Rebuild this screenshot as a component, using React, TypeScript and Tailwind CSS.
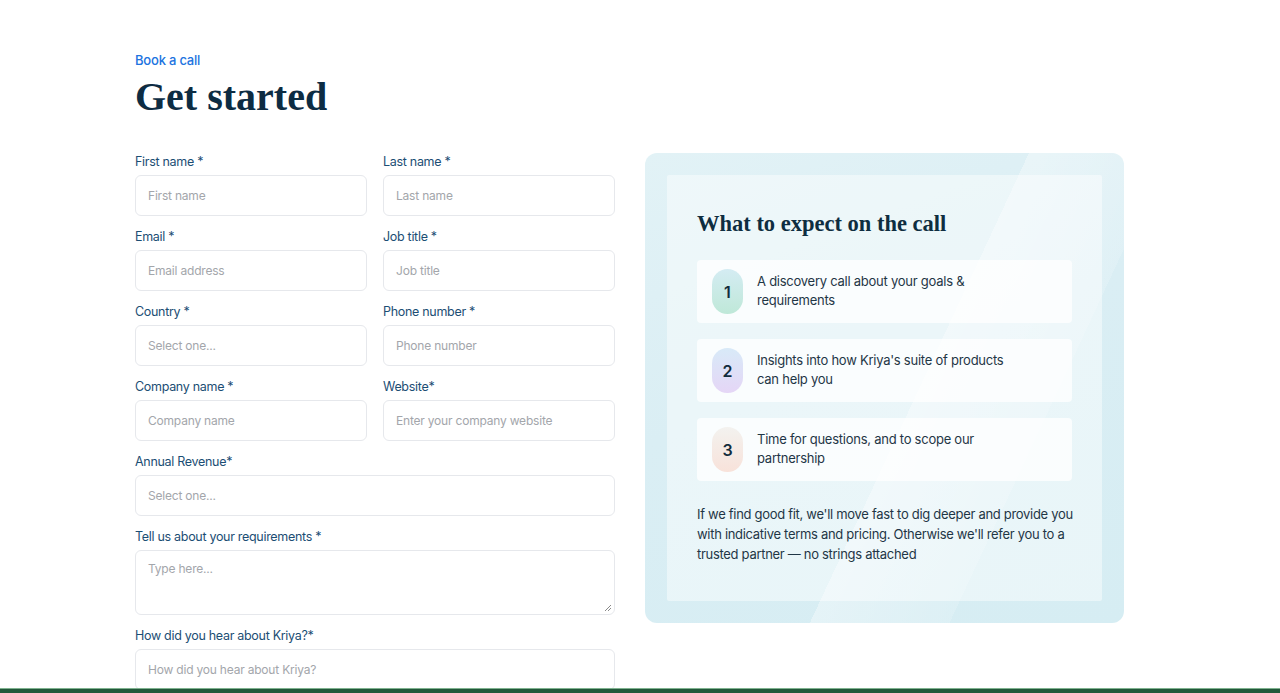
import React from "react";

const sans = { fontFamily: "Inter, 'Open Sans', sans-serif" };

function Field({ label, placeholder, className = "" }: { label: string; placeholder: string; className?: string }) {
  return (
    <div className={`flex flex-col ${className}`}>
      <label className="text-[12.5px] leading-[16px] text-[#1c4e74] mt-[1px] mb-[5px] tracking-[-0.3px]">{label}</label>
      <div className="h-[41px] rounded-[6px] border border-[#e6e8ec] bg-white flex items-center px-[12px] text-[12px] tracking-[-0.2px] text-[#a3a6ab]">
        {placeholder}
      </div>
    </div>
  );
}

function Item({ n, text, grad }: { n: string; text: React.ReactNode; grad: string }) {
  return (
    <div className="h-[63px] rounded-[4px] bg-white/75 flex items-center pl-[15px]">
      <div className={`w-[31px] h-[45px] rounded-full flex items-center justify-center text-[16px] font-semibold text-[#122c3c] ${grad}`}>
        {n}
      </div>
      <div className="ml-[14px] -mt-[2px] text-[13px] leading-[19px] tracking-[-0.25px] text-[#1f3646]">{text}</div>
    </div>
  );
}

export default function App() {
  return (
    <div className="relative w-[1280px] h-[693px] overflow-hidden bg-white" style={sans}>
      <div className="pl-[135px] pt-[51px]">
        <div className="text-[13px] leading-[18px] font-medium text-[#2073e0] tracking-[-0.2px]">Book a call</div>
        <h1
          className="mt-[5px] text-[40px] leading-[46px] font-bold text-[#0d2c43]"
          style={{ fontFamily: "'Liberation Serif', 'DejaVu Serif', serif" }}
        >
          Get started
        </h1>
        <div className="mt-[33px] flex gap-[30px]">
          <div className="w-[480px] flex flex-col gap-[12px]">
            <div className="grid grid-cols-2 gap-x-[16px] gap-y-[12px]">
              <Field label="First name *" placeholder="First name" />
              <Field label="Last name *" placeholder="Last name" />
              <Field label="Email *" placeholder="Email address" />
              <Field label="Job title *" placeholder="Job title" />
              <Field label="Country *" placeholder="Select one..." />
              <Field label="Phone number *" placeholder="Phone number" />
              <Field label="Company name *" placeholder="Company name" />
              <Field label="Website*" placeholder="Enter your company website" />
            </div>
            <Field label="Annual Revenue*" placeholder="Select one..." />
            <div className="flex flex-col">
              <label className="text-[12.5px] leading-[16px] text-[#1c4e74] mt-[1px] mb-[5px] tracking-[-0.3px]">Tell us about your requirements *</label>
              <div className="relative h-[65px] rounded-[6px] border border-[#e6e8ec] bg-white px-[12px] pt-[9px] text-[12px] tracking-[-0.2px] text-[#a3a6ab]">
                Type here...
                <svg className="absolute right-[2px] bottom-[2px]" width="8" height="8" viewBox="0 0 8 8">
                  <path d="M7 1 L1 7 M7 4 L4 7" stroke="#8a8a8a" strokeWidth="1" />
                </svg>
              </div>
            </div>
            <Field label="How did you hear about Kriya?*" placeholder="How did you hear about Kriya?" />
          </div>

          <div
            className="relative w-[479px] h-[470px] rounded-[12px] p-[22px] overflow-hidden"
            style={{ background: "linear-gradient(160deg, #e2f2f6 0%, #daeef4 45%, #d6edf3 100%)" }}
          >
            <div className="absolute inset-0 bg-[linear-gradient(115deg,transparent_55%,rgba(255,255,255,0.35)_55%,rgba(255,255,255,0.15)_75%,transparent_75%)]" />
            <div className="relative h-full rounded-[2px] bg-white/45 pl-[30px] pr-[30px] pt-[35px]">
              <h2
                className="text-[22.5px] leading-[28px] font-bold text-[#0e2d40]"
                style={{ fontFamily: "'Liberation Serif', 'DejaVu Serif', serif" }}
              >
                What to expect on the call
              </h2>
              <div className="mt-[22px] flex flex-col gap-[16px]">
                <Item
                  n="1"
                  grad="bg-[linear-gradient(180deg,#d4ecf3_0%,#bfe8d8_100%)]"
                  text={<>A discovery call about your goals &amp;<br />requirements</>}
                />
                <Item
                  n="2"
                  grad="bg-[linear-gradient(180deg,#d8eaf8_0%,#e5d6f6_100%)]"
                  text={<>Insights into how Kriya's suite of products<br />can help you</>}
                />
                <Item
                  n="3"
                  grad="bg-[linear-gradient(180deg,#f3f2ef_0%,#f8e2da_100%)]"
                  text={<>Time for questions, and to scope our<br />partnership</>}
                />
              </div>
              <p className="mt-[23px] -mr-[8px] text-[13px] leading-[20px] tracking-[-0.3px] text-[#1f3646]">
                If we find good fit, we'll move fast to dig deeper and provide you with indicative terms and pricing. Otherwise we'll refer you to a trusted partner — no strings attached
              </p>
            </div>
          </div>
        </div>
      </div>
      <div className="absolute left-0 right-0 bottom-0 h-[5px] bg-[#22583a] border-t border-[#7fb28f]" />
    </div>
  );
}
